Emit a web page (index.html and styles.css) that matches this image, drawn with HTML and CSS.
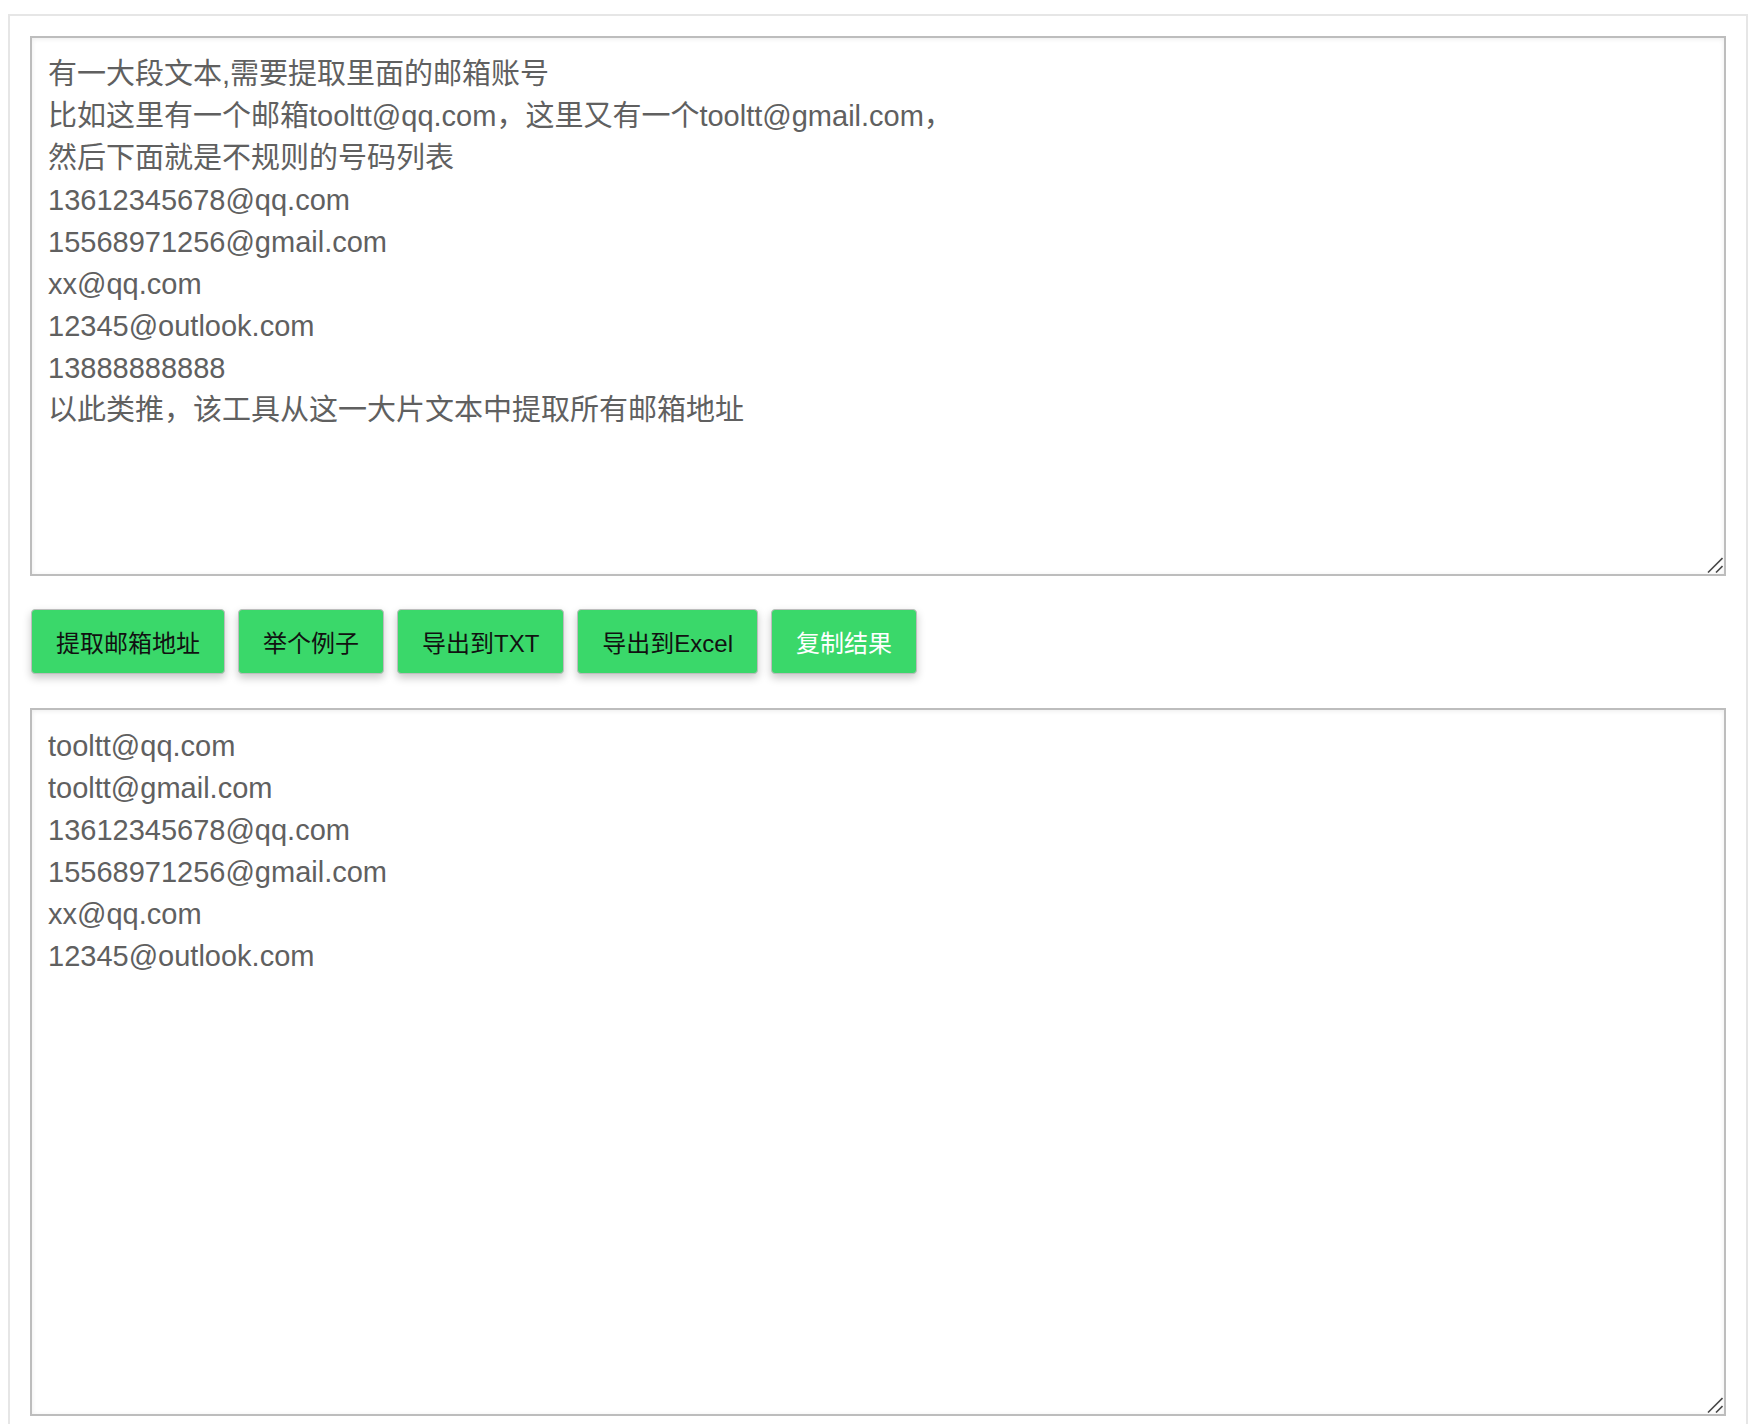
FILE: index.html
```html
<!DOCTYPE html>
<html lang="zh-CN">
<head>
<meta charset="utf-8">
<title>提取邮箱地址</title>
<link rel="stylesheet" href="styles.css">
</head>
<body>
<div class="panel">
<div class="field">
<textarea class="box box-input" spellcheck="false">有一大段文本,需要提取里面的邮箱账号
比如这里有一个邮箱tooltt@qq.com，这里又有一个tooltt@gmail.com，
然后下面就是不规则的号码列表
13612345678@qq.com
15568971256@gmail.com
xx@qq.com
12345@outlook.com
13888888888
以此类推，该工具从这一大片文本中提取所有邮箱地址</textarea>
<svg class="grip" width="16" height="16" viewBox="0 0 16 16" aria-hidden="true"><path d="M1 15.5L15.5 1M9 15.5L15.5 9" stroke="#4a4a4a" stroke-width="1.6" fill="none"/></svg>
</div>
<div class="actions">
<button class="btn">提取邮箱地址</button>
<button class="btn">举个例子</button>
<button class="btn">导出到TXT</button>
<button class="btn">导出到Excel</button>
<button class="btn btn-light">复制结果</button>
</div>
<div class="field">
<textarea class="box box-output" spellcheck="false">tooltt@qq.com
tooltt@gmail.com
13612345678@qq.com
15568971256@gmail.com
xx@qq.com
12345@outlook.com</textarea>
<svg class="grip" width="16" height="16" viewBox="0 0 16 16" aria-hidden="true"><path d="M1 15.5L15.5 1M9 15.5L15.5 9" stroke="#4a4a4a" stroke-width="1.6" fill="none"/></svg>
</div>
</div>
</body>
</html>
```
FILE: styles.css
```css
html, body {
  background: #ffffff;
}
body {
  margin: 14px 8px 8px 8px;
  font-family: "Liberation Sans", "Noto Sans CJK SC", sans-serif;
}
.panel {
  border: 2px solid #e6e6e6;
  box-shadow: 0 0 8px rgba(0, 0, 0, 0.08);
  padding: 20px;
  background: #fff;
}
.field {
  position: relative;
}
.box {
  display: block;
  width: 100%;
  box-sizing: border-box;
  margin: 0;
  border: 2px solid #bdbdbd;
  box-shadow: inset 0 1px 5px rgba(0, 0, 0, 0.08);
  padding: 15px 16px;
  font-family: "Liberation Sans", "Noto Sans CJK SC", sans-serif;
  font-size: 29px;
  line-height: 42px;
  color: #606060;
  background: #fff;
  outline: none;
  resize: none;
}
.box-input {
  height: 540px;
}
.box-output {
  height: 708px;
}
.grip {
  position: absolute;
  right: 3px;
  bottom: 3px;
  display: block;
}
.actions {
  display: flex;
  gap: 13px;
  margin: 33px 0 34px 1px;
}
.btn {
  height: 65px;
  padding: 0 24px;
  background: #3ad86a;
  border: 1px solid #bdbdbd;
  border-radius: 4px;
  box-shadow: 0 4px 8px rgba(0, 0, 0, 0.22);
  font-family: "Liberation Sans", "Noto Sans CJK SC", sans-serif;
  font-size: 24px;
  color: #111111;
  cursor: pointer;
}
.btn-light {
  color: #ffffff;
}
```
